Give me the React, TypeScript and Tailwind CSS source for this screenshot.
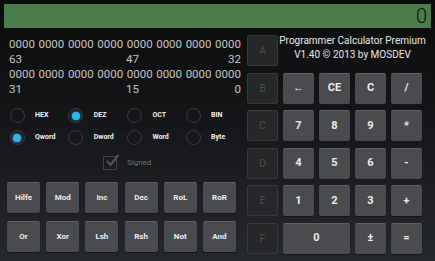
import React from 'react';

const GROUPS = ['0000', '0000', '0000', '0000', '0000', '0000', '0000', '0000'];

const BitRow: React.FC = () => (
  <div className="flex justify-between h-[15px] items-center">
    {GROUPS.map((g, i) => (
      <span key={i}>{g}</span>
    ))}
  </div>
);

const BitLabels: React.FC<{ a: string; b: string; c: string }> = ({ a, b, c }) => (
  <div className="flex h-[15px] items-center">
    <div className="w-1/2">{a}</div>
    <div className="w-1/2 flex justify-between pl-[1px]">
      <span>{b}</span>
      <span>{c}</span>
    </div>
  </div>
);

const Radio: React.FC<{ label: string; checked?: boolean }> = ({ label, checked }) => (
  <div className="flex items-center w-[58.7px]">
    <div className="w-[15px] h-[15px] rounded-full border-[1.5px] border-[#3b3d40] flex items-center justify-center">
      {checked && <div className="w-[8px] h-[8px] rounded-full bg-[#33b5e5] shadow-[0_0_3px_#33b5e5]" />}
    </div>
    <span className="ml-[10.5px] text-[7px] font-bold text-[#f0f0f0]">{label}</span>
  </div>
);

const GrayBtn: React.FC<{ label: string; className?: string }> = ({ label, className = '' }) => (
  <div
    className={`h-[31px] rounded-[2px] bg-[#4a4b4e] border-t border-[#5e5f62] shadow-[0_1px_1px_#15171a] flex items-center justify-center text-[#ececec] font-bold ${className}`}
  >
    {label}
  </div>
);

const HexBtn: React.FC<{ label: string }> = ({ label }) => (
  <div className="h-[31px] w-[31px] shrink-0 rounded-[2px] bg-[#262729] border border-[#38393b] flex items-center justify-center text-[10px] text-[#4c4d4f]">
    {label}
  </div>
);

const App: React.FC = () => {
  const leftRows = [
    ['Hilfe', 'Mod', 'Inc', 'Dec', 'RoL', 'RoR'],
    ['Or', 'Xor', 'Lsh', 'Rsh', 'Not', 'And'],
  ];

  return (
    <div
      className="w-[435px] h-[261px] overflow-hidden bg-gradient-to-b from-[#0b0b0b] via-[#16171a] to-[#25282d]"
      style={{ fontFamily: 'Roboto, "Noto Sans", sans-serif' }}
    >
      {/* display */}
      <div className="px-[4px] pt-[4px]">
        <div className="h-[24px] bg-[#4a7d4b] flex items-center justify-end pr-[4px] text-[20px] font-light text-[#111] leading-none">
          0
        </div>
      </div>

      <div className="flex">
        {/* left side */}
        <div className="w-[247px] shrink-0">
          <div className="pl-[9px] pr-[6px] pt-[9px] text-[11.5px] text-[#c4c4c4] leading-none">
            <BitRow />
            <BitLabels a="63" b="47" c="32" />
            <BitRow />
            <BitLabels a="31" b="15" c="0" />
          </div>

          <div className="pl-[9.5px] mt-[11px] flex flex-col gap-[7px]">
            <div className="flex">
              <Radio label="HEX" />
              <Radio label="DEZ" checked />
              <Radio label="OCT" />
              <Radio label="BIN" />
            </div>
            <div className="flex">
              <Radio label="Qword" checked />
              <Radio label="Dword" />
              <Radio label="Word" />
              <Radio label="Byte" />
            </div>
          </div>

          <div className="flex items-center pl-[103px] mt-[11px]">
            <div className="w-[14px] h-[14px] border border-[#3e4043] relative">
              <svg viewBox="0 0 16 16" className="absolute -top-[4px] left-[1px] w-[15px] h-[15px]">
                <path d="M2 8.5 L6 12.5 L14.5 2" fill="none" stroke="#4f5154" strokeWidth="2.4" />
              </svg>
            </div>
            <span className="ml-[10px] text-[8px] text-[#6d6f72]">Signed</span>
          </div>

          <div className="pl-[7px] mt-[12px] flex flex-col gap-[8px]">
            {leftRows.map((row, r) => (
              <div key={r} className="flex gap-[6.2px]">
                {row.map((l) => (
                  <GrayBtn key={l} label={l} className="w-[33px] text-[8px]" />
                ))}
              </div>
            ))}
          </div>
        </div>

        {/* right side */}
        <div className="pt-[7px] flex flex-col gap-[6.5px]">
          <div className="flex gap-[5px] items-start h-[31px]">
            <HexBtn label="A" />
            <div className="w-[139px] flex flex-col items-center text-[10px] leading-[14px] text-[#e8e8e8] whitespace-nowrap -mt-[1px]">
              <div>Programmer Calculator Premium</div>
              <div>V1.40 © 2013 by MOSDEV</div>
            </div>
          </div>
          <div className="flex gap-[5px]">
            <HexBtn label="B" />
            <GrayBtn label="←" className="w-[31px] text-[11px]" />
            <GrayBtn label="CE" className="w-[31px] text-[11px]" />
            <GrayBtn label="C" className="w-[31px] text-[11px]" />
            <GrayBtn label="/" className="w-[31px] text-[11px]" />
          </div>
          <div className="flex gap-[5px]">
            <HexBtn label="C" />
            <GrayBtn label="7" className="w-[31px] text-[11px]" />
            <GrayBtn label="8" className="w-[31px] text-[11px]" />
            <GrayBtn label="9" className="w-[31px] text-[11px]" />
            <GrayBtn label="*" className="w-[31px] text-[11px]" />
          </div>
          <div className="flex gap-[5px]">
            <HexBtn label="D" />
            <GrayBtn label="4" className="w-[31px] text-[11px]" />
            <GrayBtn label="5" className="w-[31px] text-[11px]" />
            <GrayBtn label="6" className="w-[31px] text-[11px]" />
            <GrayBtn label="-" className="w-[31px] text-[11px]" />
          </div>
          <div className="flex gap-[5px]">
            <HexBtn label="E" />
            <GrayBtn label="1" className="w-[31px] text-[11px]" />
            <GrayBtn label="2" className="w-[31px] text-[11px]" />
            <GrayBtn label="3" className="w-[31px] text-[11px]" />
            <GrayBtn label="+" className="w-[31px] text-[11px]" />
          </div>
          <div className="flex gap-[5px]">
            <HexBtn label="F" />
            <GrayBtn label="0" className="w-[67px] text-[11px]" />
            <GrayBtn label="±" className="w-[31px] text-[11px]" />
            <GrayBtn label="=" className="w-[31px] text-[11px]" />
          </div>
        </div>
      </div>
    </div>
  );
};

export default App;
